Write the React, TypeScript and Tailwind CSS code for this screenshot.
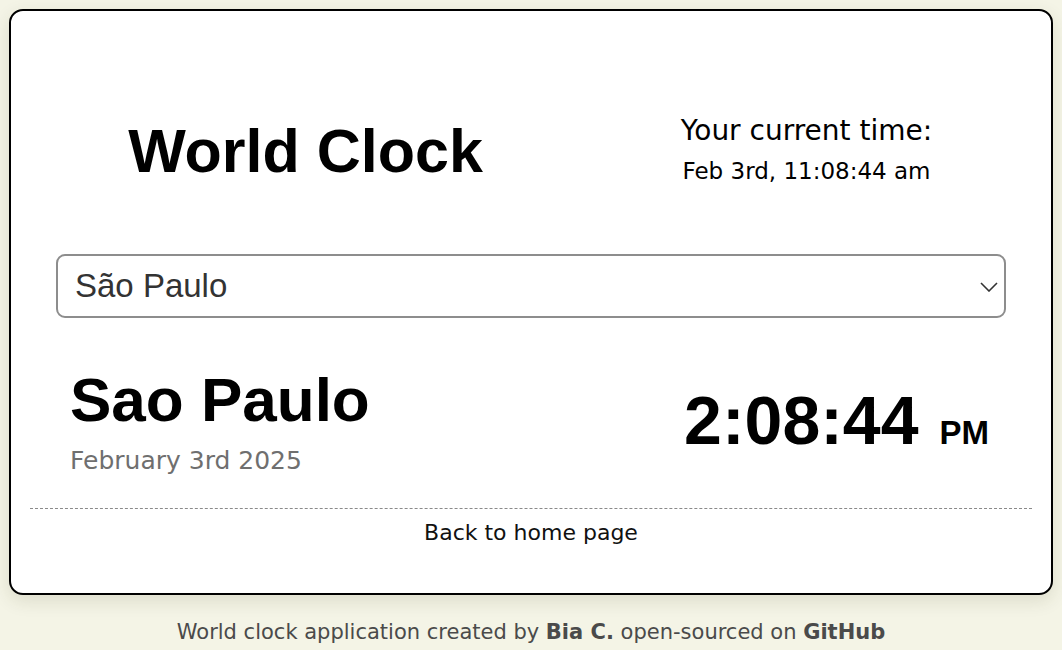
import React from 'react';

const regular = "font-['DejaVu_Sans',sans-serif]";
const heavy = "font-['Liberation_Sans',Arial,sans-serif] font-bold";

export default function App() {
  return (
    <div className={`min-h-screen bg-[#f4f4e6] px-[9px] pt-[9px] ${regular}`}>
      <div className="rounded-[14px] border-2 border-black bg-white px-[19px] pt-[100px] pb-[44px] shadow-[0_6px_18px_rgba(60,60,20,0.12)]">
        {/* header */}
        <div className="flex items-center justify-around">
          <h1 className={`w-[358px] whitespace-nowrap text-center text-[61px] leading-none text-black ${heavy}`}>
            World Clock
          </h1>
          <div className="w-[258px] whitespace-nowrap text-center text-black">
            <div className="text-[28px] leading-[40px]">Your current time:</div>
            <div className="text-[23px] leading-[40px]">Feb 3rd, 11:08:44 am</div>
          </div>
        </div>

        <div className="px-[26px]">
          {/* city picker */}
          <div className="relative mt-[63px]">
            <select
              defaultValue="sao-paulo"
              className="h-[64px] w-full appearance-none rounded-[9px] border-2 border-[#8d8d8d] bg-white pl-[17px] font-['Liberation_Sans',Arial,sans-serif] text-[33px] text-[#333] outline-none"
            >
              <option value="sao-paulo">São Paulo</option>
            </select>
            <svg
              className="pointer-events-none absolute right-[8px] top-[28px]"
              width="18"
              height="10"
              viewBox="0 0 18 10"
              fill="none"
            >
              <path d="M1 1l8 8 8-8" stroke="#333" strokeWidth="1.6" />
            </svg>
          </div>

          {/* selected city */}
          <div className="mt-[51px] flex items-center justify-between pl-[14px] pr-[17px]">
            <div>
              <div className={`text-[62px] leading-none text-black ${heavy}`}>Sao Paulo</div>
              <div className="mt-[14px] text-[25px] leading-[32px] text-[#6f6f6f]">February 3rd 2025</div>
            </div>
            <div className={`mb-[7px] flex items-baseline text-black ${heavy}`}>
              <span className="text-[68px] leading-none">2:08:44</span>
              <span className="ml-[21px] text-[33px] leading-none">PM</span>
            </div>
          </div>
        </div>

        <div className="mt-[31px] border-t border-dashed border-[#8a8a8a] pt-[8px] text-center text-[22px] leading-[32px] text-[#111]">
          Back to home page
        </div>
      </div>

      <footer className="mt-[23px] text-center text-[21px] leading-[28px] text-[#4a4a4a]">
        World clock application created by <strong className="font-bold">Bia C.</strong> open-sourced on{' '}
        <strong className="font-bold">GitHub</strong>
      </footer>
    </div>
  );
}
